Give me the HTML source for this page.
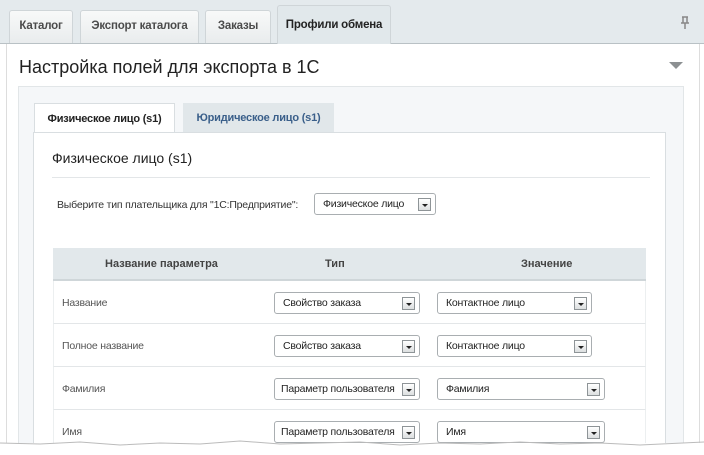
<!DOCTYPE html>
<html><head><meta charset="utf-8"><style>
*{margin:0;padding:0;box-sizing:border-box}
html,body{width:704px;height:455px;overflow:hidden}
body{background:#fff;font-family:"Liberation Sans",Arial,sans-serif;position:relative}
.top{position:absolute;left:0;top:0;width:704px;height:44px;background:#e4eaed;border-bottom:1px solid #b9c1c5}
.tab{position:absolute;top:10px;height:33px;background:linear-gradient(#f8f9f9,#e9eced);border:1px solid #cfd5d8;border-bottom:none;border-radius:3px 3px 0 0;font-size:11.5px;font-weight:bold;color:#4b4b4b;line-height:30px;text-align:center;letter-spacing:-0.2px}
.tab.act{top:5px;height:39px;background:#e1e8eb;color:#222;line-height:38px}
.panel{position:absolute;left:6px;top:44px;width:694px;height:411px;background:#fff;border-left:1px solid #ddd;border-right:1px solid #ddd}
h1{position:absolute;left:19px;top:57px;font-size:18px;font-weight:normal;color:#222}
.tri{position:absolute;left:669px;top:62px;width:0;height:0;border-left:7px solid transparent;border-right:7px solid transparent;border-top:7px solid #8c9092}
.inner{position:absolute;left:18px;top:86px;width:666px;height:370px;background:#f5f7f9;border:1px solid #e2e6e8}
.it{position:absolute;top:103px;height:30px;font-size:11px;font-weight:bold;line-height:30px;text-align:center;letter-spacing:-0.2px}
.box{position:absolute;left:33px;top:132px;width:633px;height:330px;background:#fff;border:1px solid #d9dee1}
h2{position:absolute;left:52px;top:150px;font-size:14px;font-weight:normal;color:#222}
.hr{position:absolute;left:52px;top:177px;width:598px;height:1px;background:#e3e6e8}
.lab{position:absolute;font-size:10.5px;color:#333;letter-spacing:-0.2px;white-space:nowrap}
.sel{position:absolute;height:22px;border:1px solid #a9aeb1;border-radius:3px;background:#fff;font-size:10.5px;color:#222;line-height:20px;padding-left:8px;white-space:nowrap;overflow:hidden;letter-spacing:-0.2px}
.sel b{position:absolute;right:4px;top:4px;width:13px;height:13px;border:1px solid #8e9497;background:linear-gradient(#fff,#dcdfe0)}
.sel b:after{content:"";position:absolute;left:3px;top:5px;border-left:3px solid transparent;border-right:3px solid transparent;border-top:3px solid #222}
.th{position:absolute;left:53px;top:248px;width:593px;height:33px;background:#e2e8eb;border-bottom:2px solid #cfd6d9}
.th span{position:absolute;top:10px;font-size:11px;font-weight:bold;color:#444}
.row{position:absolute;left:53px;width:593px;height:43px;border-bottom:1px solid #e3e6e8;border-left:1px solid #eceff0;border-right:1px solid #eceff0}
.row .lab{left:8px;top:16px;color:#555}
</style></head><body>
<div class="top"></div>
<div class="tab" style="left:9px;width:64px">Каталог</div>
<div class="tab" style="left:80px;width:119px">Экспорт каталога</div>
<div class="tab" style="left:205px;width:66px">Заказы</div>
<div class="tab act" style="left:277px;width:114px">Профили обмена</div>
<svg style="position:absolute;left:680px;top:16px" width="10" height="13"><path d="M2 1h6M3 1v6M7 1v6M1 7h8M5 7v6" stroke="#888" stroke-width="1.5" fill="none"/></svg>
<div class="panel"></div>
<h1>Настройка полей для экспорта в 1С</h1>
<div class="tri"></div>
<div class="inner"></div>
<div class="it" style="left:34px;width:141px;background:#fff;border:1px solid #d9dee1;border-bottom:none;color:#222;height:31px">Физическое лицо (s1)</div>
<div class="it" style="left:183px;width:151px;background:#e1e7ea;color:#3a5f8a">Юридическое лицо (s1)</div>
<div class="box"></div>
<h2>Физическое лицо (s1)</h2>
<div class="hr"></div>
<div class="lab" style="left:57px;top:199px">Выберите тип плательщика для "1С:Предприятие":</div>
<div class="sel" style="left:314px;top:193px;width:122px">Физическое лицо<b></b></div>
<div class="th"><span style="left:52px">Название параметра</span><span style="left:272px">Тип</span><span style="left:468px">Значение</span></div>
<div class="row" style="top:281px"><div class="lab">Название</div></div>
<div class="row" style="top:324px"><div class="lab">Полное название</div></div>
<div class="row" style="top:367px"><div class="lab">Фамилия</div></div>
<div class="row" style="top:410px"><div class="lab">Имя</div></div>
<div class="sel" style="left:274px;top:292px;width:146px">Свойство заказа<b></b></div>
<div class="sel" style="left:437px;top:292px;width:155px">Контактное лицо<b></b></div>
<div class="sel" style="left:274px;top:335px;width:146px">Свойство заказа<b></b></div>
<div class="sel" style="left:437px;top:335px;width:155px">Контактное лицо<b></b></div>
<div class="sel" style="left:274px;top:378px;width:146px;padding-left:6px">Параметр пользователя<b></b></div>
<div class="sel" style="left:437px;top:378px;width:168px">Фамилия<b></b></div>
<div class="sel" style="left:274px;top:421px;width:146px;padding-left:6px">Параметр пользователя<b></b></div>
<div class="sel" style="left:437px;top:421px;width:168px">Имя<b></b></div>
<div style="position:absolute;left:0;top:443px;width:704px;height:12px;background:#fff"></div>
<svg style="position:absolute;left:0;top:437px" width="704" height="12"><path d="M0 6 L40 7 L80 5 L120 8 L160 6 L200 7 L240 4 L280 7 L320 6 L360 5 L400 8 L440 6 L480 7 L520 5 L560 7 L600 6 L640 8 L704 5" stroke="#bbb" fill="none"/></svg>
</body></html>
